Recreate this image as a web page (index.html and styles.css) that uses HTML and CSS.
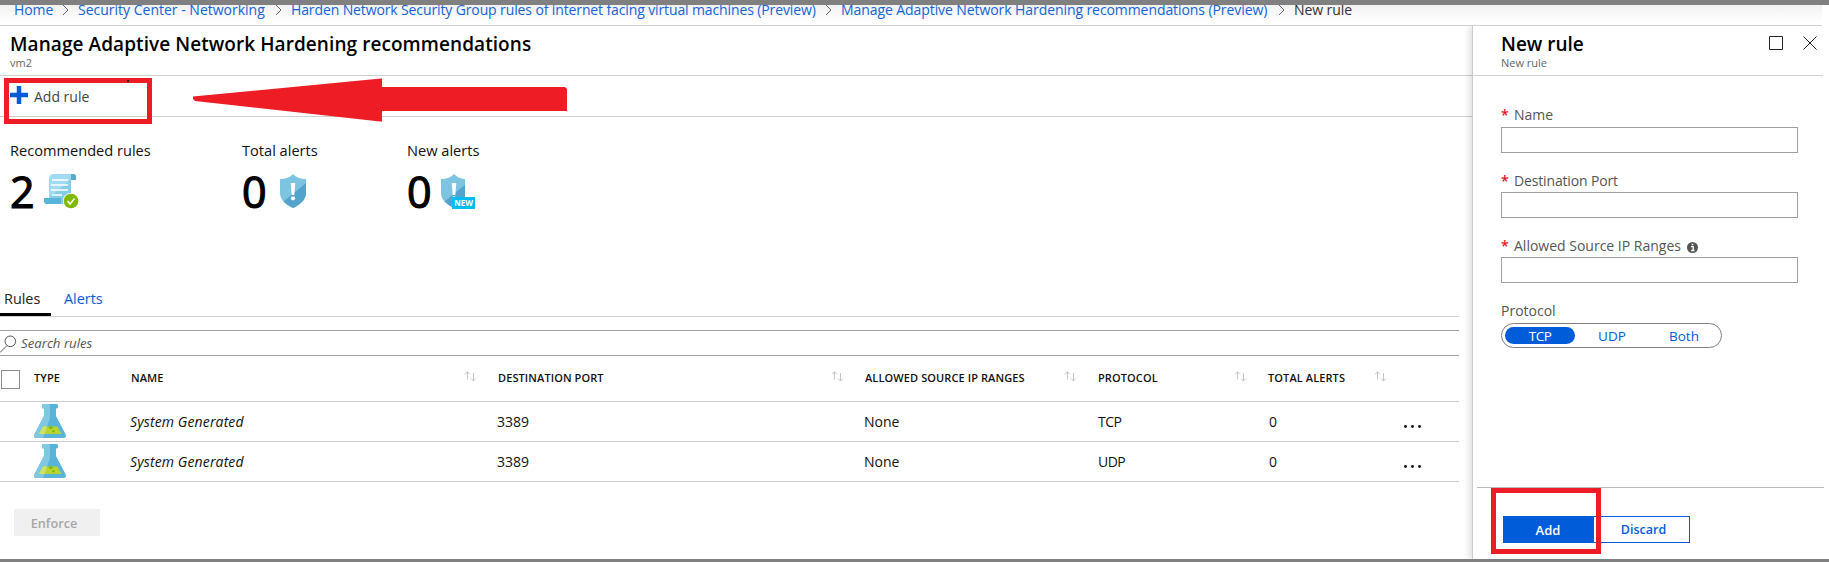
FILE: index.html
```html
<!DOCTYPE html>
<html lang="en">
<head>
<meta charset="utf-8">
<title>New rule</title>
<link rel="stylesheet" href="styles.css">
</head>
<body>
<svg class="defs" width="0" height="0">
  <symbol id="chev" viewBox="0 0 7 12"><path d="M1 1l5 5-5 5" fill="none" stroke="#666"/></symbol>
  <symbol id="sort" viewBox="0 0 13 11"><path d="M3.5 8.5V.8M1 3.3L3.5.8 6 3.300M9.500 2v8M7 7.500l2.500 2.500L12 7.500" fill="none" stroke="#c4c4c4"/></symbol>
  <symbol id="shield" viewBox="0 0 26 34"><path d="M13 0c3 3.200 7 5 13 5v14c0 7-6 11.500-13 15C6 30.500 0 26 0 19V5c6 0 10-1.800 13-5z" fill="#7cc4e0"/><path d="M26 9v10c0 7-6 11.500-13 15-4-2-7-4-9.500-6.500z" fill="#53a4cc"/><path d="M10.700 9h4.600l-1 12h-2.600z" fill="#fff"/><circle cx="13" cy="24.300" r="2.100" fill="#fff"/></symbol>
  <symbol id="dots" viewBox="0 0 17 3"><circle cx="1.500" cy="1.500" r="1.400"/><circle cx="8.500" cy="1.500" r="1.400"/><circle cx="15.500" cy="1.500" r="1.400"/></symbol>
  <symbol id="flask" viewBox="0 0 32 34"><path d="M9.500 0h13Q24 0 24 1.500v1.500Q24 4.500 22 4.500V12L31.500 30Q33 34 29 34H3Q-1 34 .5 30L10 12V4.500Q8 4.500 8 3V1.500Q8 0 9.500 0z" fill="#59b4d9"/><path d="M9.500 0H16V14L9 34H3Q-1 34 .5 30L10 12V4.500Q8 4.500 8 3V1.500Q8 0 9.500 0z" fill="#80c8e2"/><path d="M9 22.500h14.500l4 7.500h-22.500z" fill="#b8d432"/><path d="M9 22.500h4.200l-2.700 7.500h-5.500z" fill="#cbe26a"/><path d="M14.500 22.500h4.500q0 2.500-2.200 2.500t-2.300-2.500z" fill="#7fba00"/><circle cx="19.500" cy="27.200" r="1.200" fill="#7fba00"/></symbol>
</svg>
<div class="bar bar-top"></div>
<nav class="crumbs">
  <a class="c1">Home</a><svg><use href="#chev"/></svg>
  <a class="c2">Security Center - Networking</a><svg><use href="#chev"/></svg>
  <a class="c3">Harden Network Security Group rules of internet facing virtual machines (Preview)</a><svg><use href="#chev"/></svg>
  <a class="c4">Manage Adaptive Network Hardening recommendations (Preview)</a><svg><use href="#chev"/></svg>
  <span class="c5">New rule</span>
</nav>
<div class="blades">
  <main class="main">
    <header class="head"><h1 class="main-title">Manage Adaptive Network Hardening recommendations</h1><p>vm2</p></header>
    <div class="toolbar">
      <svg class="plus" width="18" height="18"><path d="M9 0v18M0 9h18" stroke="#015cda" stroke-width="4.500"/></svg><span class="add-rule">Add rule</span>
      <div class="mark mark-tool"></div><i class="dot"></i>
      <svg class="arrow" width="374" height="44"><path d="M0 21v-2.500L188 .5h1V9h183l2 2v22H189v10.500h-2L2 23z" fill="#ee1c24"/></svg>
    </div>
    <section class="stats">
      <div class="stat s1"><span>Recommended rules</span><div><b>2</b>
        <svg class="doc" width="35" height="35" viewBox="0 0 35 35"><path d="M9 0h20L27 6v24H5V6Q5 0 9 0z" fill="#a1dbf3"/><path d="M27 5v25H5v-6z" fill="#83cde9"/><path d="M27 0h2.500Q32 0 32 3v3h-5z" fill="#59a9cc"/><path d="M0 24h17v6H2.500Q0 30 0 27z" fill="#59b4d9"/><path d="M8 6h16M7 11h17M7 16h17M8 21h10" stroke="#fff" stroke-width="1.500"/><circle cx="27" cy="27" r="8" fill="#fff"/><circle cx="27" cy="27" r="7.300" fill="#7fba00"/><path d="M23.500 27l2.500 3 4.500-5.500" fill="none" stroke="#fff" stroke-width="1.500"/></svg></div></div>
      <div class="stat s2"><span>Total alerts</span><div><b>0</b><svg width="26" height="34"><use href="#shield"/></svg></div></div>
      <div class="stat s3"><span>New alerts</span><div><b>0</b><span class="newshield"><svg width="24" height="34" viewBox="0 0 24 34"><use href="#shield" width="26" height="34"/></svg><em>NEW</em></span></div></div>
    </section>
    <div class="tabs"><span class="tab on">Rules</span><span class="tab">Alerts</span></div>
    <div class="search"><svg width="17" height="18" viewBox="0 0 17 18" fill="none" stroke="#555"><circle cx="10.300" cy="6.300" r="5.300"/><path d="M7 10.500L0 17.500"/></svg><span>Search rules</span></div>
    <div class="table">
      <div class="row th">
        <i class="check"></i><span class="t1">TYPE</span>
        <span class="t2">NAME</span><svg><use href="#sort"/></svg>
        <span class="t3">DESTINATION PORT</span><svg><use href="#sort"/></svg>
        <span class="t4">ALLOWED SOURCE IP RANGES</span><svg><use href="#sort"/></svg>
        <span class="t5">PROTOCOL</span><svg><use href="#sort"/></svg>
        <span class="t6">TOTAL ALERTS</span><svg><use href="#sort"/></svg>
      </div>
      <div class="row td"><svg class="flask"><use href="#flask"/></svg><em>System Generated</em><span>3389</span><span>None</span><span class="proto">TCP</span><span>0</span><svg class="more"><use href="#dots"/></svg></div>
      <div class="row td"><svg class="flask"><use href="#flask"/></svg><em>System Generated</em><span>3389</span><span>None</span><span class="proto">UDP</span><span>0</span><svg class="more"><use href="#dots"/></svg></div>
    </div>
    <button class="enforce">Enforce</button>
  </main>
  <aside class="panel">
    <header class="head"><h2>New rule</h2><p>New rule</p>
      <svg class="win" width="48" height="14" fill="none" stroke="#222"><path d="M.5.5h13v13H.5zM34.500.5l13 13M47.500.5l-13 13"/></svg></header>
    <form class="form">
      <label class="f1"><i>*</i><span>Name</span></label><div class="input"></div>
      <label class="f2"><i>*</i><span>Destination Port</span></label><div class="input"></div>
      <label class="f3"><i>*</i><span>Allowed Source IP Ranges</span><svg width="11" height="11"><circle cx="5.500" cy="5.500" r="5.500" fill="#555"/><path d="M4 4.700h2.200V8.500M4 8.500h3.500M4.700 2.500h1.600" stroke="#fff" stroke-width="1.300" fill="none"/></svg></label><div class="input"></div>
      <label class="f4">Protocol</label>
      <div class="toggle"><span class="sel">TCP</span><span>UDP</span><span>Both</span></div>
    </form>
    <footer class="foot"><button class="add">Add</button><button class="discard">Discard</button><div class="mark mark-add"></div></footer>
  </aside>
</div>
<div class="bar bar-bottom"></div>
</body>
</html>
```
FILE: styles.css
```css
* { box-sizing: border-box; }
body { margin: 0; height: 562px; overflow: hidden; display: flex; flex-direction: column; background: #fff; color: #111; font: 14px/20px "Open Sans", "Noto Sans", sans-serif; }
h1, h2, p { margin: 0; }
button { margin: 0; padding: 0; border: 0; font: inherit; }
svg { display: block; flex: none; }
.defs { position: absolute; }
.bar { flex: none; background: #808080; }
.bar-top { height: 5px; }
.bar-bottom { height: 3px; }

.crumbs { flex: none; display: flex; height: 21px; width: 1822px; padding-left: 14px; overflow: hidden; border-bottom: 1px solid #d0d0d0; background: linear-gradient(#f1f1f1, #fff 17px); color: #333; white-space: nowrap; letter-spacing: -.08px; }
.crumbs a, .crumbs span { margin-top: -5px; height: 20px; flex: none; }
.crumbs a { color: #1464d8; }
.crumbs svg { width: 7px; height: 12px; margin: -1px 9px 0 0; }
.c1 { width: 48px; }
.crumbs .c2 { width: 197px; letter-spacing: 0; }
.c3 { width: 534px; letter-spacing: -.12px; }
.c4 { width: 437px; }

.blades { display: flex; height: 533px; }
.main { width: 1472px; }
.head { height: 50px; border-bottom: 1px solid #d0d0d0; padding: 7px 0 0 10px; white-space: nowrap; }
h1, h2 { font-size: 19px; line-height: 22px; font-weight: 600; color: #000; }
h1 { letter-spacing: .07px; }
.head p { font-size: 11px; line-height: 15px; color: #666; }
.toolbar { position: relative; height: 41px; border-bottom: 1px solid #d0d0d0; display: flex; padding: 10px 0 0 10px; }
.add-rule { margin: 1px 0 0 6px; color: #444; }
.mark { position: absolute; border: 5px solid #ee1c24; }
.mark-tool { left: 4px; top: 2px; width: 148px; height: 46px; }
.dot { position: absolute; left: 127px; top: 4px; width: 2px; height: 2px; background: #222; }
.arrow { position: absolute; left: 193px; top: 2px; }

.stats { display: flex; height: 158px; padding: 23px 0 0 10px; font-size: 14.600px; }
.stat > div { display: flex; margin-top: 14px; }
.stat b { font-size: 43px; line-height: 36px; font-weight: 400; -webkit-text-stroke: 1.200px #000; color: #000; height: 36px; width: 34px; }
.s1 { width: 232px; }
.s2 { width: 165px; }
.s2 b { width: 38px; }
.newshield { position: relative; }
.newshield em { position: absolute; left: 11px; top: 23px; width: 23px; height: 12px; background: #00bcf2; color: #fff; font: bold 8px/12px "Open Sans", sans-serif; text-align: center; }

.tabs { display: flex; width: 1459px; height: 42px; border-bottom: 1px solid #d0d0d0; font-size: 14.400px; }
.tab { height: 41px; padding: 14px 0 0 4px; color: #015cda; }
.tab.on { width: 51px; margin-right: 9px; color: #222; border-bottom: 3px solid #000; }
.search { display: flex; width: 1459px; height: 26px; margin-top: 13px; border: solid #a0a0a0; border-width: 1px 0; padding-top: 4px; font-size: 13.200px; font-style: italic; color: #555; }
.search span { margin-left: 4px; margin-top: -2px; }
.table { width: 1459px; }
.row { border-bottom: 1px solid #ccc; display: flex; white-space: nowrap; }
.th { height: 46px; padding: 12px 0 0 1px; font-size: 11px; font-weight: 600; color: #111; letter-spacing: .1px; }
.th svg { width: 13px; height: 11px; margin: 3px 21px 0 0; }
.check { width: 19px; height: 19px; margin: 2px 14px 0 0; border: 1px solid #8c8c8c; flex: none; }
.t1 { width: 97px; }
.t2 { width: 333px; }
.t3 { width: 333px; }
.t4 { width: 199px; }
.t5 { width: 136px; }
.t6 { width: 106px; }
.td { height: 40px; display: grid; grid-template-columns: 96px 367px 367px 234px 171px 135px 17px; padding: 10px 0 0 34px; line-height: 20px; }
.td em { letter-spacing: .13px; }
.proto { letter-spacing: -.5px; }
.flask { width: 32px; height: 34px; margin-top: -8px; }
.more { width: 17px; height: 3px; margin-top: 13px; fill: #111; }
.enforce { display: block; margin: 27px 0 0 14px; width: 86px; height: 27px; padding-right: 6px; background: #f0f0f0; color: #a6a6a6; font-size: 12.700px; font-weight: 600; }

.panel { width: 357px; height: 533px; display: flex; flex-direction: column; border-left: 1px solid #ccc; box-shadow: -3px 0 6px rgba(0, 0, 0, .12); background: #fff; clip-path: inset(0 0 0 -12px); }
.panel .head { position: relative; width: 350px; padding-left: 28px; flex: none; }
.win { position: absolute; left: 296px; top: 10px; }
.form { padding: 29px 0 0 28px; flex: 1; color: #555; }
.form label { display: flex; height: 22px; padding-top: 1px; white-space: nowrap; }
.form label i { width: 13px; color: #e81123; font-style: normal; font-weight: 600; }
.form label svg { margin: 6px 0 0 6px; }
.form .f1 { margin-top: -1px; height: 23px; }
.f2 { letter-spacing: -.15px; }
.input { width: 297px; height: 26px; border: 1px solid #a0a0a0; margin-bottom: 17px; }
.form .f4 { margin-bottom: 1px; }
.toggle { display: flex; width: 221px; height: 25px; padding: 3px; border: 1px solid #808080; border-radius: 13px; font-size: 13.500px; line-height: 19px; text-align: center; color: #015cda; }
.toggle span { flex: none; width: 70px; margin-right: 2px; border-radius: 10px; }
.toggle .sel { background: #015cda; color: #fff; letter-spacing: -.5px; }
.foot { position: relative; display: flex; height: 72px; width: 347px; margin-left: 4px; padding: 28px 0 0 26px; border-top: 1px solid #bbb; font-size: 13px; font-weight: 600; }
.add { width: 90px; height: 27px; background: #015cda; color: #fff; }
.discard { width: 97px; height: 27px; padding-left: 4px; border: 1px solid #015cda; background: #fff; color: #015cda; font-size: 12.500px; }
.mark-add { left: 14px; top: 0; width: 110px; height: 66px; }
```
